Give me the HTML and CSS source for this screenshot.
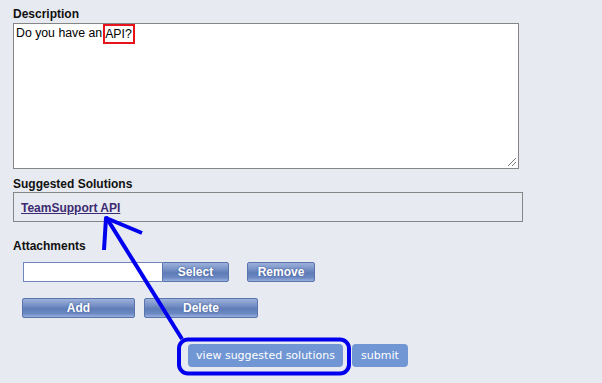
FILE: index.html
```html
<!DOCTYPE html>
<html lang="en">
<head>
  <meta charset="UTF-8" />
  <title>New Ticket</title>
  <link rel="stylesheet" href="styles.css">
</head>
<body>
  <div class="form">
    <div class="label">Description</div>
    <div class="desc">
      <div class="desc-text">Do you have an<span class="mark">API?</span></div>
      <div class="grip"></div>
    </div>

    <div class="label label-gap">Suggested Solutions</div>
    <div class="solutions">
      <a href="#" class="solution-link">TeamSupport API</a>
    </div>

    <div class="label label-attach">Attachments</div>
    <div class="row row-file">
      <div class="file">
        <div class="file-box"></div>
        <div class="gloss btn-select">Select</div>
      </div>
      <div class="gloss btn-remove">Remove</div>
    </div>
    <div class="row row-add">
      <div class="gloss btn-add">Add</div>
      <div class="gloss btn-delete">Delete</div>
    </div>

    <div class="actions">
      <div class="flat btn-view">view suggested solutions</div>
      <div class="flat btn-submit">submit</div>
    </div>
  </div>

  <svg class="scribble" width="602" height="383" viewBox="0 0 602 383">
    <g fill="none" stroke="#0000ee" stroke-width="4" stroke-linejoin="round">
      <path d="M182 339 L106 217" />
      <path d="M104 250 L106 218 L142 233" />
      <rect x="179" y="339.5" width="170" height="34" rx="9" />
    </g>
  </svg>
</body>
</html>
```

FILE: styles.css
```css
html, body {
  margin: 0;
  padding: 0;
  background-color: #e7eaf0;
  font-family: "Liberation Sans", Arial, sans-serif;
  color: #111;
  overflow: hidden;
}

.form {
  padding: 7px 0 0 13px;
  height: 376px;
}

.label {
  font-size: 12px;
  font-weight: bold;
  line-height: 14px;
  margin-bottom: 2px;
}

.label-gap {
  margin-top: 8px;
  margin-bottom: 1px;
}

.label-attach {
  margin-top: 17px;
  margin-bottom: 9px;
}

.desc {
  position: relative;
  box-sizing: border-box;
  width: 506px;
  height: 146px;
  background: #fff;
  border: 1px solid #858585;
  padding: 2px 2px;
}

.desc-text {
  font-size: 12.3px;
  line-height: 15px;
  color: #000;
}

.mark {
  display: inline-block;
  margin-top: -2px;
  margin-left: 1px;
  padding: 1px 1px 0 0;
  height: 15px;
  border: 2px solid #e8141b;
  vertical-align: top;
}

.grip {
  position: absolute;
  right: 2px;
  bottom: 2px;
  width: 8px;
  height: 8px;
  background: linear-gradient(135deg, transparent 45%, #777 45%, #777 52%, transparent 52%, transparent 70%, #777 70%, #777 77%, transparent 77%);
}

.solutions {
  box-sizing: border-box;
  width: 510px;
  height: 30px;
  border: 1px solid #858585;
  padding: 5px 7px 0;
}

.solution-link {
  font-size: 12px;
  font-weight: bold;
  line-height: 14px;
  color: #3c2a73;
  text-decoration: underline;
}

.row {
  display: flex;
  height: 20px;
}

.row-file {
  margin-left: 10px;
  gap: 18px;
}

.row-add {
  margin-top: 16px;
  margin-left: 9px;
  gap: 9px;
}

.file {
  display: flex;
}

.file-box {
  box-sizing: border-box;
  width: 139px;
  height: 20px;
  background: #fff;
  border: 1px solid #6f85b9;
  border-right: none;
}

.gloss {
  box-sizing: border-box;
  height: 20px;
  border: 1px solid #5b74ad;
  border-radius: 2px;
  background: linear-gradient(to bottom, #9cb0da 0%, #7d96c9 30%, #5f7cb8 55%, #6c88c2 80%, #98afdd 100%);
  color: #fff;
  font-size: 12px;
  font-weight: bold;
  line-height: 18px;
  text-align: center;
  text-shadow: 0 0 2px #3d5490;
}

.btn-select {
  width: 67px;
  border-radius: 0 2px 2px 0;
}

.btn-remove {
  width: 68px;
}

.btn-add {
  width: 113px;
}

.btn-delete {
  width: 114px;
}

.actions {
  display: flex;
  gap: 9px;
  margin-top: 26px;
  margin-left: 175px;
}

.flat {
  box-sizing: border-box;
  height: 23px;
  background: #7096d4;
  border-radius: 4px;
  color: #fff;
  font-family: "DejaVu Sans", sans-serif;
  font-size: 11px;
  line-height: 23px;
  text-align: center;
}

.btn-view {
  width: 155px;
}

.btn-submit {
  width: 56px;
}

.scribble {
  position: absolute;
  left: 0;
  top: 0;
  pointer-events: none;
}
```
